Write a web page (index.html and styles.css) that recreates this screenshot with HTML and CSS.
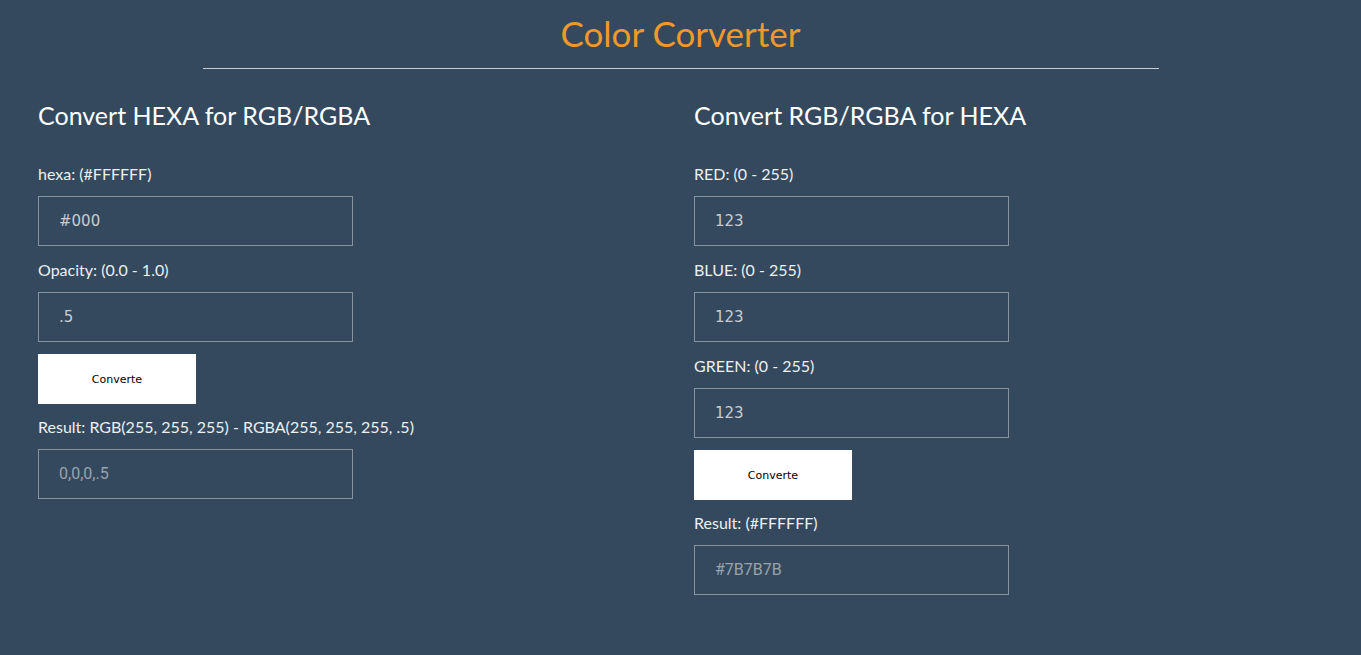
FILE: index.html
```html
<!DOCTYPE html>
<html lang="en">
<head>
<meta charset="utf-8">
<title>Color Corverter</title>
<link rel="stylesheet" href="styles.css">
</head>
<body>
<header class="top">
  <h1 class="title">Color Corverter</h1>
  <hr class="rule">
</header>
<main class="columns">
  <section class="panel">
    <h2 class="panel-title">Convert HEXA for RGB/RGBA</h2>
    <label class="field-label">hexa: (#FFFFFF)</label>
    <input class="field" type="text" value="#000">
    <label class="field-label">Opacity: (0.0 - 1.0)</label>
    <input class="field" type="text" value=".5">
    <button class="btn">Converte</button>
    <label class="field-label">Result: RGB(255, 255, 255) - RGBA(255, 255, 255, .5)</label>
    <input class="field result" type="text" placeholder="0,0,0,.5">
  </section>
  <section class="panel">
    <h2 class="panel-title">Convert RGB/RGBA for HEXA</h2>
    <label class="field-label">RED: (0 - 255)</label>
    <input class="field" type="text" value="123">
    <label class="field-label">BLUE: (0 - 255)</label>
    <input class="field" type="text" value="123">
    <label class="field-label">GREEN: (0 - 255)</label>
    <input class="field" type="text" value="123">
    <button class="btn">Converte</button>
    <label class="field-label">Result: (#FFFFFF)</label>
    <input class="field result" type="text" placeholder="#7B7B7B">
  </section>
</main>
</body>
</html>
```
FILE: styles.css
```css
html, body {
  margin: 0;
  padding: 0;
  background: #34495e;
  min-height: 100%;
}
body {
  font-family: Lato, "Open Sans", sans-serif;
  color: #ecf0f1;
  height: 655px;
}
.top {
  padding-top: 12px;
}
.title {
  margin: 0;
  text-align: center;
  font-size: 35px;
  font-weight: 400;
  line-height: 42px;
  color: #f0982a;
}
.rule {
  width: 956px;
  margin: 14px auto 0;
  border: 0;
  height: 1px;
  background: #c9ccd0;
}
.columns {
  display: grid;
  grid-template-columns: 656px 1fr;
  padding-left: 38px;
}
.panel {
  display: flex;
  flex-direction: column;
  align-items: flex-start;
}
.panel-title {
  margin: 31px 0 0;
  font-size: 25px;
  font-weight: 400;
  line-height: 30px;
  color: #ffffff;
}
.field-label {
  display: block;
  font-size: 16px;
  line-height: 22px;
  margin: 13px 0 11px;
  color: #ecf0f1;
}
.panel-title + .field-label {
  margin-top: 33px;
}
.btn + .field-label {
  margin-top: 12px;
}
.field {
  box-sizing: border-box;
  width: 315px;
  height: 50px;
  padding: 0 20px;
  background: transparent;
  border: 1px solid #8593a0;
  color: #c8ccd0;
  font-family: "DejaVu Sans", sans-serif;
  font-size: 15px;
  outline: none;
}
.field::placeholder {
  font-family: Roboto, sans-serif;
  font-size: 16px;
  color: #98a3ad;
}
.btn {
  width: 158px;
  height: 50px;
  margin-top: 12px;
  border: 0;
  background: #ffffff;
  color: #000;
  font-family: "DejaVu Sans", sans-serif;
  font-size: 11px;
  padding: 0;
}
```
